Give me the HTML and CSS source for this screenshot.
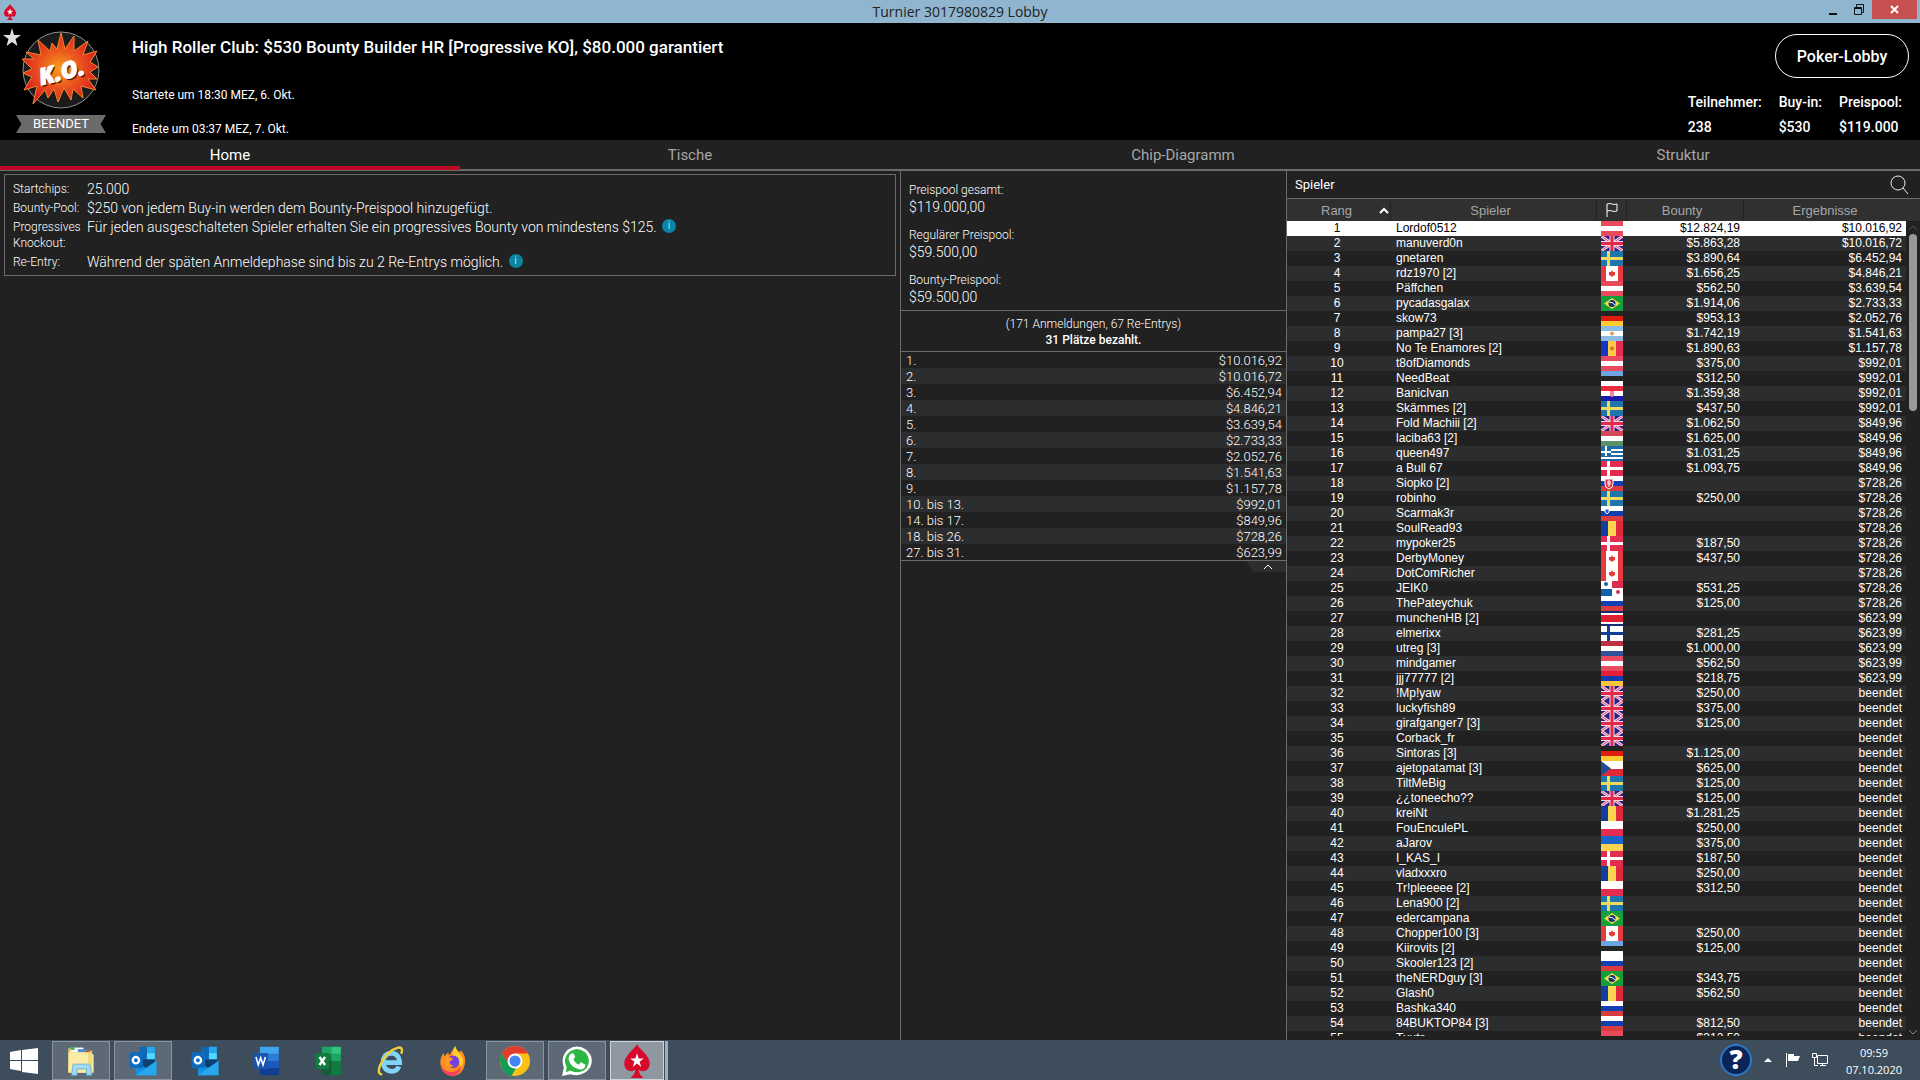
FILE: index.html
```html
<!DOCTYPE html>
<html lang="de">
<head>
    <meta charset="UTF-8">
    <meta name="viewport" content="width=device-width, initial-scale=1.0">
    <title>Turnier 3017980829 Lobby</title>
    <link rel="stylesheet" href="styles.css">
</head>
<body>
    <!-- shared shapes: spade logo and country flags -->
    <svg class="defs" aria-hidden="true">
        <symbol id="spade" viewBox="0 0 32 40"><path fill="#d70a2c" d="M16 0c3 7 15 13 15 23 0 6-4 9-8 9-2 0-4-1-5-2 0 4 2 7 5 9v1H9v-1c3-2 5-5 5-9-1 1-3 2-5 2-4 0-8-3-8-9C1 13 13 7 16 0z"/><path fill="#fff" d="M16 11l2 6h6l-5 4 2 6-5-4-5 4 2-6-5-4h6z"/></symbol>
        <symbol id="at" viewBox="0 0 22 15"><path fill="#ea4a5e" d="M0 0h22v15H0z"/><path fill="#fff" d="M0 5h22v5H0z"/></symbol>
        <symbol id="gb" viewBox="0 0 22 15"><path fill="#2a1f86" d="M0 0h22v15H0z"/><path stroke="#f6d5e6" stroke-width="3" d="M0 0l22 15M22 0L0 15"/><path stroke="#e0506e" d="M0 0l22 15M22 0L0 15"/><path stroke="#f6d5e6" stroke-width="5" d="M11 0v15M0 7.500h22"/><path stroke="#e02a48" stroke-width="3" d="M11 0v15M0 7.500h22"/></symbol>
        <symbol id="se" viewBox="0 0 22 15"><path fill="#1e76ac" d="M0 0h22v15H0z"/><path fill="#f0d95c" d="M6 0h3v15H6zM0 6h22v3H0z"/></symbol>
        <symbol id="ca" viewBox="0 0 22 15"><path fill="#e8393e" d="M0 0h22v15H0z"/><path fill="#fff" d="M5 0h12v15H5z"/><path fill="#e8393e" d="M11 4l1 2 2 0 0 3-2 1-1 1-1-1-2-1 0-3 2 0z"/></symbol>
        <symbol id="br" viewBox="0 0 22 15"><path fill="#159e3c" d="M0 0h22v15H0z"/><path fill="#f2e14a" d="M11 2l8 5.500-8 5.500-8-5.500z"/><circle cx="11" cy="7.500" r="3.500" fill="#16356e"/><path stroke="#fff" fill="none" d="M8 6q4 0 6 3"/></symbol>
        <symbol id="de" viewBox="0 0 22 15"><path fill="#252222" d="M0 0h22v5H0z"/><path fill="#de1c0f" d="M0 5h22v5H0z"/><path fill="#fbcb30" d="M0 10h22v5H0z"/></symbol>
        <symbol id="ar" viewBox="0 0 22 15"><path fill="#8cbbe4" d="M0 0h22v15H0z"/><path fill="#fff" d="M0 5h22v5H0z"/><circle cx="11" cy="7.500" r="2" fill="#e0a050"/></symbol>
        <symbol id="md" viewBox="0 0 22 15"><path fill="#1436c0" d="M0 0h7v15H0z"/><path fill="#fcc94c" d="M7 0h8v15H7z"/><path fill="#e62c50" d="M15 0h7v15h-7z"/><circle cx="11" cy="7.500" r="2" fill="#d07820"/></symbol>
        <symbol id="ee" viewBox="0 0 22 15"><path fill="#6aa6e4" d="M0 0h22v5H0z"/><path fill="#252525" d="M0 5h22v5H0z"/><path fill="#fff" d="M0 10h22v5H0z"/></symbol>
        <symbol id="hr" viewBox="0 0 22 15"><path fill="#ee2a3c" d="M0 0h22v5H0z"/><path fill="#fff" d="M0 5h22v5H0z"/><path fill="#1a1aa8" d="M0 10h22v5H0z"/><path fill="#f08a98" d="M9 5h4v5l-2 1-2-1z"/></symbol>
        <symbol id="hu" viewBox="0 0 22 15"><path fill="#d64758" d="M0 0h22v5H0z"/><path fill="#fff" d="M0 5h22v5H0z"/><path fill="#5c9168" d="M0 10h22v5H0z"/></symbol>
        <symbol id="gr" viewBox="0 0 22 15"><path fill="#1c6aa8" d="M0 0h22v15H0z"/><path stroke="#fff" stroke-width="2" d="M10 4h12M10 8h12M0 12h22M5 0v10M0 6h10"/></symbol>
        <symbol id="dk" viewBox="0 0 22 15"><path fill="#e42c50" d="M0 0h22v15H0z"/><path fill="#fff" d="M6 0h3v15H6zM0 6h22v3H0z"/></symbol>
        <symbol id="ru" viewBox="0 0 22 15"><path fill="#fff" d="M0 0h22v5H0z"/><path fill="#1240b0" d="M0 5h22v5H0z"/><path fill="#d83c3c" d="M0 10h22v5H0z"/></symbol>
        <symbol id="sk" viewBox="0 0 22 15"><use href="#ru"/><path fill="#e02c44" stroke="#fff" d="M4 3h8v5q0 4-4 5-4-1-4-5z"/><path stroke="#fff" d="M8 4v7M6 6h4M6 8h4"/></symbol>
        <symbol id="si" viewBox="0 0 22 15"><use href="#ru"/><path fill="#2858b8" stroke="#fff" d="M4 3h4v3l-2 2-2-2z"/></symbol>
        <symbol id="ro" viewBox="0 0 22 15"><path fill="#103e9c" d="M0 0h7v15H0z"/><path fill="#fcd450" d="M7 0h8v15H7z"/><path fill="#e0283c" d="M15 0h7v15h-7z"/></symbol>
        <symbol id="pa" viewBox="0 0 22 15"><path fill="#fff" d="M0 0h22v15H0z"/><path fill="#d82c50" d="M11 0h11v7H11z"/><path fill="#1460ac" d="M0 8h11v7H0z"/><circle cx="5" cy="3" r="2" fill="#2060a0"/><circle cx="17" cy="11" r="2" fill="#d83050"/></symbol>
        <symbol id="cr" viewBox="0 0 22 15"><path fill="#fff" d="M0 0h22v15H0z"/><path fill="#182c78" d="M0 0h22v2H0zM0 13h22v2H0z"/><path fill="#e02030" d="M0 4h22v7H0z"/></symbol>
        <symbol id="fi" viewBox="0 0 22 15"><path fill="#fff" d="M0 0h22v15H0z"/><path fill="#123f94" d="M6 0h3v15H6zM0 6h22v3H0z"/></symbol>
        <symbol id="nl" viewBox="0 0 22 15"><path fill="#bc3040" d="M0 0h22v5H0z"/><path fill="#fff" d="M0 5h22v5H0z"/><path fill="#30509c" d="M0 10h22v5H0z"/></symbol>
        <symbol id="am" viewBox="0 0 22 15"><path fill="#e42038" d="M0 0h22v5H0z"/><path fill="#143cac" d="M0 5h22v5H0z"/><path fill="#fcc43c" d="M0 10h22v5H0z"/></symbol>
        <symbol id="cz" viewBox="0 0 22 15"><path fill="#fff" d="M0 0h22v8H0z"/><path fill="#e02838" d="M0 8h22v7H0z"/><path fill="#1f4c94" d="M0 0l10 7.500L0 15z"/></symbol>
        <symbol id="pl" viewBox="0 0 22 15"><path fill="#fff" d="M0 0h22v8H0z"/><path fill="#e42c50" d="M0 8h22v7H0z"/></symbol>
        <symbol id="ua" viewBox="0 0 22 15"><path fill="#1c66c8" d="M0 0h22v8H0z"/><path fill="#fcd450" d="M0 8h22v7H0z"/></symbol>
        <symbol id="outlook" viewBox="0 0 34 38"><path fill="#1068b4" d="M12 1h20v22H12z"/><path fill="#28a8ea" d="M22 1h10v8H22z"/><path fill="#50d9ff" d="M22 9h10v8H22z"/><path fill="#0f3f6e" d="M8 17h24v6l-12 8z"/><path fill="#1490df" d="M8 19l13 9 13-9v18H8z"/><path fill="#28a8ea" d="M8 37l26-18v18z"/><path fill="#0f6cbd" d="M0 8h17v20H0z"/><circle cx="8" cy="18" r="4" fill="none" stroke="#fff" stroke-width="3"/></symbol>
    </svg>

    <div class="titlebar">
        <svg class="titlebar-logo"><use href="#spade"/></svg>
        <span class="titlebar-text">Turnier 3017980829 Lobby</span>
        <div class="window-buttons">
            <button aria-label="Minimieren"><svg width="10" height="12"><path stroke="#111" stroke-width="2" d="M1 10h8"/></svg></button>
            <button aria-label="Wiederherstellen"><svg width="10" height="12"><path fill="none" stroke="#111" d="M2.500 3V.5h7v8H7M.5 3.500h7v7h-7zM0 4.500h8"/></svg></button>
            <button class="close" aria-label="Schließen"><svg width="10" height="10"><path stroke="#fff" stroke-width="2" d="M1 1l7 7M8 1L1 8"/></svg></button>
        </div>
    </div>

    <header class="header">
        <svg class="favorite" viewBox="0 0 18 18"><path fill="#e0e0e0" d="M9 0l2 7h7l-5.500 4 2 7L9 14l-5.500 4 2-7L0 7h7z"/></svg>
        <div class="badge">
            <svg class="ko" viewBox="0 0 78 78">
                <defs>
                    <radialGradient id="burst"><stop offset="0" stop-color="#f9a11b"/><stop offset=".5" stop-color="#ec5a1e"/><stop offset="1" stop-color="#dc2020"/></radialGradient>
                </defs>
                <circle cx="39" cy="39" r="38" fill="#1b1b1b" stroke="#909090"/>
                <path fill="url(#burst)" stroke="#f4892a" d="M39 2l4 16 9-13 0 15 14-10-5 14 14-4-7 11 8 5-8 5 7 7-9 0 8 11-15-4 2 12-10-9-2 11-7-12-6 14-4-13-6 9-3-8-12 14 4-18-13 4 8-13-9-4 9-4-10-10 12 0L4 21l15 3L16 9l12 11 2-8 5 6z"/>
                <g transform="rotate(-14 39 39)" font-family="Open Sans" font-weight="800" font-style="italic" font-size="23">
                    <text x="17" y="51" fill="#5a1408">K.O.</text>
                    <text x="16" y="49" fill="#fff" stroke="#fff">K.O.</text>
                </g>
            </svg>
            <span class="ribbon">BEENDET</span>
        </div>
        <div class="info">
            <h1>High Roller Club: $530 Bounty Builder HR [Progressive KO], $80.000 garantiert</h1>
            <p>Startete um 18:30 MEZ, 6. Okt.</p>
            <p>Endete um 03:37 MEZ, 7. Okt.</p>
        </div>
        <div class="summary">
            <button class="lobby-btn">Poker-Lobby</button>
            <dl>
                <div><dt>Teilnehmer:</dt><dd>238</dd></div>
                <div><dt>Buy-in:</dt><dd>$530</dd></div>
                <div><dt>Preispool:</dt><dd>$119.000</dd></div>
            </dl>
        </div>
    </header>

    <nav class="tabs">
        <a href="#home" class="active">Home</a>
        <a href="#tische">Tische</a>
        <a href="#chips">Chip-Diagramm</a>
        <a href="#struktur">Struktur</a>
    </nav>

    <main class="main">
        <section class="home">
            <dl class="details">
                <dt>Startchips:</dt><dd>25.000</dd>
                <dt>Bounty-Pool:</dt><dd>$250 von jedem Buy-in werden dem Bounty-Preispool hinzugefügt.</dd>
                <dt>Progressives Knockout:</dt><dd>Für jeden ausgeschalteten Spieler erhalten Sie ein progressives Bounty von mindestens $125. <button class="tip" aria-label="Info">i</button></dd>
                <dt>Re-Entry:</dt><dd>Während der späten Anmeldephase sind bis zu 2 Re-Entrys möglich. <button class="tip" aria-label="Info">i</button></dd>
            </dl>
        </section>

        <section class="prizes">
            <dl class="pools">
                <dt>Preispool gesamt:</dt><dd>$119.000,00</dd>
                <dt>Regulärer Preispool:</dt><dd>$59.500,00</dd>
                <dt>Bounty-Preispool:</dt><dd>$59.500,00</dd>
            </dl>
            <div class="entries">
                <p>(171 Anmeldungen, 67 Re-Entrys)</p>
                <p><strong>31 Plätze bezahlt.</strong></p>
            </div>
            <table class="payouts">
                <tbody>
                    <tr><td>1.</td><td>$10.016,92</td></tr>
                    <tr><td>2.</td><td>$10.016,72</td></tr>
                    <tr><td>3.</td><td>$6.452,94</td></tr>
                    <tr><td>4.</td><td>$4.846,21</td></tr>
                    <tr><td>5.</td><td>$3.639,54</td></tr>
                    <tr><td>6.</td><td>$2.733,33</td></tr>
                    <tr><td>7.</td><td>$2.052,76</td></tr>
                    <tr><td>8.</td><td>$1.541,63</td></tr>
                    <tr><td>9.</td><td>$1.157,78</td></tr>
                    <tr><td>10. bis 13.</td><td>$992,01</td></tr>
                    <tr><td>14. bis 17.</td><td>$849,96</td></tr>
                    <tr><td>18. bis 26.</td><td>$728,26</td></tr>
                    <tr><td>27. bis 31.</td><td>$623,99</td></tr>
                </tbody>
            </table>
            <button class="collapse" aria-label="Einklappen"><svg width="10" height="6"><path fill="none" stroke="#fff" d="M1 5l4-4 4 4"/></svg></button>
        </section>

        <section class="players">
            <div class="players-head">
                <h2>Spieler</h2>
                <button aria-label="Suchen"><svg width="20" height="20"><circle cx="8" cy="8" r="7" fill="none" stroke="#eee"/><path stroke="#eee" d="M13 13l5 6"/></svg></button>
            </div>
            <div class="players-body">
                <table>
                    <colgroup>
                        <col class="col-rank"><col class="col-name"><col class="col-flag"><col class="col-bounty"><col>
                    </colgroup>
                    <thead>
                        <tr>
                            <th><div class="sort">Rang <svg width="10" height="7"><path fill="none" stroke="#fff" stroke-width="2" d="M1 6l4-4 4 4"/></svg></div></th>
                            <th class="wide">Spieler</th>
                            <th><svg class="flag-head" width="14" height="14"><path fill="none" stroke="#fff" d="M2 14V1q3-1 5 0t5 0v7q-3 1-5 0t-5 0"/></svg></th>
                            <th class="wide">Bounty</th>
                            <th>Ergebnisse</th>
                        </tr>
                    </thead>
                    <tbody id="playerRows"></tbody>
                </table>
                <div class="scrollbar">
                    <div class="corner"></div>
                    <svg width="10" height="7"><path fill="none" stroke="#555" d="M1 6l4-4 4 4"/></svg>
                    <div class="track"><div class="thumb"></div></div>
                    <svg width="10" height="7"><path fill="none" stroke="#888" d="M1 1l4 4 4-4"/></svg>
                </div>
            </div>
        </section>
    </main>

    <footer class="taskbar">
        <button class="start" aria-label="Start"><svg width="28" height="26"><path fill="#fff" d="M0 4l11-2v10H0zM12 2l16-2v12H12zM0 13h11v10L0 21zM12 13h16v13l-16-2z"/></svg></button>
        <button class="open" aria-label="Explorer"><svg width="34" height="38" viewBox="0 0 34 38"><path fill="#e8c65e" d="M1 3h8l2 3h20v28H1z"/><path fill="#fff" d="M4 2h16v6H4z"/><path fill="#48a860" d="M4 1h5v4H4z"/><path fill="#4890d0" d="M13 4h10v4H13z"/><path fill="#d85040" d="M22 6h6v3h-6z"/><path fill="#fbeba4" d="M1 8h27l5 3v23H1z"/><path fill="#f3da80" d="M26 9h5v25h-5z"/><path fill="#a4dcf4" stroke="#58a8d4" d="M7 23h21l3 14h-7v-8H12v8H5z"/></svg></button>
        <button class="open" aria-label="Outlook"><svg width="34" height="38"><use href="#outlook"/></svg></button>
        <button aria-label="Outlook"><svg width="34" height="38"><use href="#outlook"/></svg></button>
        <button aria-label="Word"><svg width="34" height="38" viewBox="0 0 34 38"><path fill="#41a5ee" d="M8 1h24v9H8z"/><path fill="#2b7cd3" d="M8 10h24v9H8z"/><path fill="#185abd" d="M8 19h24v9H8z"/><path fill="#103f91" d="M8 28h24v9H8z"/><path fill="#1b54b0" d="M0 9h18v20H0z"/><path fill="none" stroke="#fff" stroke-width="2" d="M3 14l3 10 3-9 3 9 3-10"/></svg></button>
        <button aria-label="Excel"><svg width="34" height="38" viewBox="0 0 34 38"><path fill="#107c41" d="M8 1h24v36H8z"/><path fill="#21a366" d="M8 1h12v9H8z"/><path fill="#33c481" d="M20 1h12v9H20z"/><path fill="#21a366" d="M20 10h12v9H20z"/><path fill="#185c37" d="M8 19h12v18H8z"/><path fill="#107c41" d="M0 9h17v20H0zM20 19h12v9H20z"/><path stroke="#fff" stroke-width="3" d="M5 14l7 10M12 14L5 24"/></svg></button>
        <button aria-label="Internet Explorer"><svg width="34" height="38" viewBox="0 0 34 38"><path fill="none" stroke="#7fd4f7" stroke-width="6" d="M9 21h19q-1-12-11-12-10 1-10 12 1 11 11 11 7 0 9-6"/><path fill="none" stroke="#f3cf34" stroke-width="3" d="M6 36q-7 0-3-11Q11 6 26 2q7-1 4 8"/></svg></button>
        <button aria-label="Firefox"><svg width="34" height="38" viewBox="0 0 34 38"><path fill="#ff9020" d="M20 0q0 5 6 8l1-3q7 8 5 18-3 14-15 15Q2 37 1 21q0-7 4-12l1 4 5-5 1 4z"/><path fill="#ffcf30" d="M20 0q1 6 6 10 7 8 1 17-3-10-10-12-2-8 3-15z"/><path fill="#f6405c" d="M1 20q2 12 13 13 9 0 13-7 0 11-11 12Q2 37 1 20z"/><circle cx="17" cy="20" r="8" fill="#7540dc"/><path fill="#ff9a24" d="M7 13q7 1 10 3-1 3-4 3-1 5 5 6-6 5-11-2z"/></svg></button>
        <button class="open" aria-label="Chrome"><svg width="32" height="38" viewBox="0 0 32 32"><circle cx="16" cy="16" r="16" fill="#fbc116"/><path fill="#e33b2e" d="M2 8q5-8 14-8 10 0 14 8H16l-7 12z"/><path fill="#109d58" d="M2 8l8 13 7 3-5 8Q1 29 0 16q0-5 2-8z"/><circle cx="16" cy="16" r="8" fill="#fff"/><circle cx="16" cy="16" r="6" fill="#4285f4"/></svg></button>
        <button class="open" aria-label="WhatsApp"><svg width="32" height="38" viewBox="0 0 32 32"><path fill="#fff" d="M0 32l2-9Q-2 12 6 4 16-3 26 4q9 8 4 19-8 11-21 7z"/><path fill="#2cb742" d="M4 28l1-5Q0 13 8 6q9-6 17 1 7 8 1 17-8 7-17 2z"/><path fill="#fff" d="M10 8q2-1 3 1l1 3-2 2q2 4 6 6l2-3 5 3q0 5-6 5-10-2-12-11 0-4 3-6z"/></svg></button>
        <button class="open current" aria-label="PokerStars"><svg width="34" height="38"><use href="#spade"/></svg></button>
        <div class="tray">
            <svg width="32" height="32"><circle cx="16" cy="16" r="15" fill="#0a2458" stroke="#2c78c8" stroke-width="2"/><text x="16" y="25" text-anchor="middle" font-family="Open Sans" font-weight="800" font-size="26" fill="#fff">?</text></svg>
            <svg width="8" height="5"><path fill="#fff" d="M0 4l4-4 4 4z"/></svg>
            <svg width="16" height="16"><path fill="#fff" d="M2 1h1v14H2zM4 2h6v7H4zM10 4h6l-2 5h-4z"/></svg>
            <svg width="16" height="16"><path fill="none" stroke="#fff" d="M5.500 3.500h10v8h-10zM8 13.500h6M10.500 12v2M2.500 6v7.500H6M.5 1.500h4v4h-4z"/></svg>
            <div class="clock"><time>09:59</time><time>07.10.2020</time></div>
        </div>
    </footer>

    <script src="script.js"></script>
</body>
</html>
```

FILE: styles.css
```css
* {
    box-sizing: border-box;
}

body {
    display: flex;
    flex-direction: column;
    height: 100vh;
    margin: 0;
    overflow: hidden;
    background-color: #212121;
    color: #fff;
    font-family: Roboto, sans-serif;
    font-size: 14px;
}

h1, h2, p, dl, dd {
    margin: 0;
}

button {
    padding: 0;
    border: none;
    background: none;
    color: inherit;
    font: inherit;
    cursor: pointer;
}

svg {
    display: block;
}

.defs {
    position: absolute;
    width: 0;
    height: 0;
}

/* Title bar */
.titlebar {
    display: grid;
    grid-template-columns: 1fr auto 1fr;
    align-items: center;
    height: 23px;
    flex: none;
    background-color: #8fb5cf;
    color: #222;
    font-family: "Open Sans", sans-serif;
}

.titlebar-logo {
    width: 14px;
    height: 16px;
    margin-left: 3px;
}

.window-buttons {
    display: flex;
    justify-content: flex-end;
    align-self: start;
    height: 19px;
    padding-right: 3px;
}

.window-buttons button {
    display: flex;
    align-items: center;
    justify-content: center;
    width: 26px;
}

.window-buttons .close {
    width: 45px;
    background-color: #c75050;
}

/* Tournament header */
.header {
    display: flex;
    height: 117px;
    flex: none;
    background-color: #000;
}

.favorite {
    width: 18px;
    height: 18px;
    margin: 5px 0 0 3px;
}

.badge {
    display: flex;
    flex-direction: column;
    align-items: center;
    width: 90px;
    padding-top: 8px;
    margin-left: -5px;
}

.ko {
    width: 78px;
    height: 78px;
}

.ribbon {
    width: 90px;
    margin-top: 6px;
    background-color: #6b6b6b;
    clip-path: polygon(0 0, 100% 0, 94% 50%, 100% 100%, 0 100%, 6% 50%);
    font-size: 13px;
    line-height: 18px;
    text-align: center;
}

.info {
    flex: 1;
    padding: 14px 0 0 26px;
}

.info h1 {
    margin-bottom: 29px;
    font-size: 17px;
    font-weight: 500;
    line-height: 20px;
}

.info p {
    margin-bottom: 16px;
    font-size: 12px;
    line-height: 18px;
}

.summary {
    display: flex;
    flex-direction: column;
    align-items: flex-end;
    padding: 11px 11px 0 0;
}

.lobby-btn {
    width: 134px;
    height: 44px;
    border: 1px solid #fff;
    border-radius: 22px;
    font-size: 16px;
    font-weight: 500;
}

.summary dl {
    display: flex;
    gap: 17px;
    padding: 12px 7px 0 0;
    font-size: 14px;
    font-weight: 500;
    line-height: 25px;
}

/* Tabs */
.tabs {
    display: grid;
    grid-template-columns: 460fr 460fr 526fr 474fr;
    height: 31px;
    flex: none;
    border-bottom: 2px solid #6b6b6b;
}

.tabs a {
    color: #a6a6a6;
    font-size: 15px;
    line-height: 30px;
    text-align: center;
    text-decoration: none;
}

.tabs .active {
    box-shadow: inset 0 -4px #bf0a26;
    color: #fff;
}

.main {
    display: grid;
    grid-template-columns: 1fr 386px 634px;
    flex: 1;
    min-height: 0;
}

/* Tournament details */
.home {
    padding: 3px 4px;
}

.details {
    display: grid;
    grid-template-columns: 74px 1fr;
    row-gap: 3px;
    padding: 6px 8px 5px;
    border: 1px solid #6b6b6b;
    font-weight: 300;
    line-height: 16px;
}

.details dt {
    font-size: 12px;
}

.tip {
    width: 14px;
    height: 14px;
    margin-left: 2px;
    border-radius: 50%;
    background-color: #0a86a4;
    font-size: 11px;
    line-height: 14px;
    vertical-align: top;
}

/* Prize pool */
.prizes {
    border-left: 1px solid #6b6b6b;
    font-size: 12px;
    font-weight: 300;
    line-height: 16px;
}

.pools {
    padding: 11px 8px 4px;
    border-bottom: 1px solid #6b6b6b;
}

.pools dd {
    margin-bottom: 11px;
    font-size: 14px;
    line-height: 18px;
}

.pools dd:last-child {
    margin-bottom: 0;
}

.entries {
    padding: 5px 0 3px;
    border-bottom: 1px solid #6b6b6b;
    text-align: center;
}

.entries strong {
    font-weight: 500;
}

.payouts {
    width: 100%;
    border-spacing: 0;
    border-bottom: 1px solid #6b6b6b;
    font-size: 13px;
    line-height: 15px;
}

.payouts td {
    height: 16px;
    padding: 1px 4px 0 5px;
}

.payouts td:last-child {
    text-align: right;
}

.payouts tr:nth-child(even) {
    background-color: #2c2d2e;
}

.collapse {
    display: flex;
    align-items: center;
    justify-content: center;
    width: 40px;
    height: 11px;
    margin-left: auto;
    padding-left: 4px;
    background-color: #2c2d2e;
    clip-path: polygon(0 0, 100% 0, 100% 100%, 18% 100%);
}

/* Player list */
.players {
    display: flex;
    flex-direction: column;
    min-height: 0;
    padding-bottom: 4px;
    border-left: 1px solid #6b6b6b;
}

.players-head {
    display: flex;
    align-items: center;
    justify-content: space-between;
    height: 28px;
    flex: none;
    padding: 0 10px 0 8px;
    border-bottom: 1px solid #6b6b6b;
}

.players-head h2 {
    font-size: 13px;
    font-weight: 400;
}

.players-body {
    display: flex;
    flex: 1;
    min-height: 0;
    overflow: hidden;
}

.players table {
    flex: 1;
    align-self: flex-start;
    table-layout: fixed;
    border-spacing: 0;
    font-family: "Liberation Sans", Arial, sans-serif;
    font-size: 12px;
    line-height: 15px;
}

.col-rank {
    width: 104px;
}

.col-name {
    width: 206px;
}

.col-flag {
    width: 30px;
}

.col-bounty {
    width: 117px;
}

.players th {
    height: 22px;
    padding: 0;
    border-right: 1px solid #222;
    background-color: #303030;
    color: #a6a6a6;
    font-size: 13px;
    font-weight: 400;
}

.players .wide {
    padding-right: 6px;
}

.players th:last-child {
    border-right: none;
}

.sort {
    display: flex;
    align-items: center;
    justify-content: space-between;
    padding: 0 1px 0 34px;
}

.flag-head {
    margin: 0 auto;
}

.players td {
    height: 15px;
    padding: 0 4px 0 5px;
}

.players tbody tr:nth-child(even) {
    background-color: #2c2d2e;
}

.players tbody .selected {
    background-color: #fff;
    color: #000;
}

.players .rank {
    padding-right: 9px;
    text-align: center;
}

.players .flag {
    padding: 0 4px;
}

.flag svg {
    width: 22px;
    height: 15px;
}

.players .amount {
    text-align: right;
}

.scrollbar {
    display: flex;
    flex-direction: column;
    align-items: center;
    gap: 3px;
    width: 14px;
}

.corner {
    width: 100%;
    height: 22px;
    background-color: #303030;
}

.track {
    flex: 1;
    width: 8px;
}

.thumb {
    height: 177px;
    border-radius: 4px;
    background-color: #999;
}

/* Taskbar */
.taskbar {
    display: flex;
    gap: 4px;
    height: 40px;
    flex: none;
    background-color: #3d4d5c;
    font-family: "Open Sans", sans-serif;
}

.taskbar button {
    display: flex;
    align-items: center;
    justify-content: center;
    width: 58px;
    margin-top: 1px;
}

.taskbar button svg {
    height: 30px;
}

.taskbar .start {
    width: 48px;
}

.taskbar .start svg {
    height: 26px;
}

.taskbar .open {
    border: 1px solid #8b959e;
    background-color: #5d6a76;
}

/* the extra edge marks a second window behind this one */
.taskbar .current {
    width: 54px;
    border-color: #d0d4d8;
    background-color: #8f98a1;
    box-shadow: 1px 0 #3d4d5c, 4px 0 #a4acb3;
}

.taskbar .current svg {
    height: 34px;
}

.tray {
    display: flex;
    align-items: center;
    gap: 12px;
    margin-left: auto;
    padding-right: 18px;
}

.clock {
    display: flex;
    flex-direction: column;
    margin-left: 6px;
    padding-top: 2px;
    font-size: 11px;
    line-height: 17px;
    text-align: center;
}
```

FILE: script.js
```js
// name, country, bounty, result ("" = no bounty won)
const players = [
    ["Lordof0512", "at", "$12.824,19", "$10.016,92"],
    ["manuverd0n", "gb", "$5.863,28", "$10.016,72"],
    ["gnetaren", "se", "$3.890,64", "$6.452,94"],
    ["rdz1970 [2]", "ca", "$1.656,25", "$4.846,21"],
    ["Päffchen", "at", "$562,50", "$3.639,54"],
    ["pycadasgalax", "br", "$1.914,06", "$2.733,33"],
    ["skow73", "de", "$953,13", "$2.052,76"],
    ["pampa27 [3]", "ar", "$1.742,19", "$1.541,63"],
    ["No Te Enamores [2]", "md", "$1.890,63", "$1.157,78"],
    ["t8ofDiamonds", "at", "$375,00", "$992,01"],
    ["NeedBeat", "ee", "$312,50", "$992,01"],
    ["BanicIvan", "hr", "$1.359,38", "$992,01"],
    ["Skämmes [2]", "se", "$437,50", "$992,01"],
    ["Fold Machiii [2]", "gb", "$1.062,50", "$849,96"],
    ["laciba63 [2]", "hu", "$1.625,00", "$849,96"],
    ["queen497", "gr", "$1.031,25", "$849,96"],
    ["a Bull 67", "dk", "$1.093,75", "$849,96"],
    ["Siopko [2]", "sk", "", "$728,26"],
    ["robinho", "se", "$250,00", "$728,26"],
    ["Scarmak3r", "si", "", "$728,26"],
    ["SoulRead93", "ro", "", "$728,26"],
    ["mypoker25", "dk", "$187,50", "$728,26"],
    ["DerbyMoney", "ca", "$437,50", "$728,26"],
    ["DotComRicher", "ca", "", "$728,26"],
    ["JEIK0", "pa", "$531,25", "$728,26"],
    ["ThePateychuk", "ru", "$125,00", "$728,26"],
    ["munchenHB [2]", "cr", "", "$623,99"],
    ["elmerixx", "fi", "$281,25", "$623,99"],
    ["utreg [3]", "nl", "$1.000,00", "$623,99"],
    ["mindgamer", "at", "$562,50", "$623,99"],
    ["jjj77777 [2]", "am", "$218,75", "$623,99"],
    ["!Mp!yaw", "gb", "$250,00", "beendet"],
    ["luckyfish89", "gb", "$375,00", "beendet"],
    ["girafganger7 [3]", "gb", "$125,00", "beendet"],
    ["Corback_fr", "gb", "", "beendet"],
    ["Sintoras [3]", "de", "$1.125,00", "beendet"],
    ["ajetopatamat [3]", "cz", "$625,00", "beendet"],
    ["TiltMeBig", "se", "$125,00", "beendet"],
    ["¿¿toneecho??", "gb", "$125,00", "beendet"],
    ["kreiNt", "ro", "$1.281,25", "beendet"],
    ["FouEnculePL", "pl", "$250,00", "beendet"],
    ["aJarov", "ua", "$375,00", "beendet"],
    ["I_KAS_I", "dk", "$187,50", "beendet"],
    ["vladxxxro", "ro", "$250,00", "beendet"],
    ["Tr!pleeeee [2]", "pl", "$312,50", "beendet"],
    ["Lena900 [2]", "se", "", "beendet"],
    ["edercampana", "br", "", "beendet"],
    ["Chopper100 [3]", "ca", "$250,00", "beendet"],
    ["Kiirovits [2]", "ee", "$125,00", "beendet"],
    ["Skooler123 [2]", "ru", "", "beendet"],
    ["theNERDguy [3]", "br", "$343,75", "beendet"],
    ["Glash0", "ro", "$562,50", "beendet"],
    ["Bashka340", "ru", "", "beendet"],
    ["84BUKTOP84 [3]", "ru", "$812,50", "beendet"],
    ["Tuuts", "at", "$312,50", "beendet"]
];

document.getElementById('playerRows').innerHTML = players.map(([name, country, bounty, result], i) => `
    <tr${i === 0 ? ' class="selected"' : ''}>
        <td class="rank">${i + 1}</td>
        <td>${name}</td>
        <td class="flag"><svg><use href="#${country}"/></svg></td>
        <td class="amount">${bounty}</td>
        <td class="amount">${result}</td>
    </tr>`).join('');
```
